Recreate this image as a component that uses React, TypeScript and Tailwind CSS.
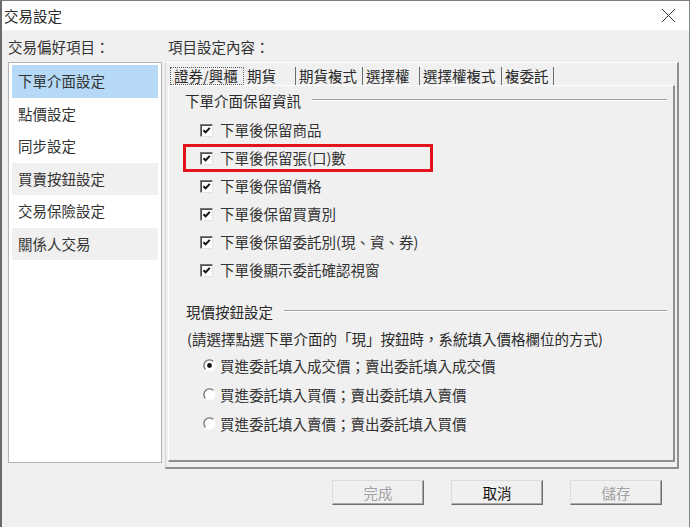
import React from "react"

const prefItems = [
  { label: "下單介面設定", bg: "bg-[#b5d9f6]" },
  { label: "點價設定", bg: "bg-white" },
  { label: "同步設定", bg: "bg-white" },
  { label: "買賣按鈕設定", bg: "bg-[#f0f0f0]" },
  { label: "交易保險設定", bg: "bg-white" },
  { label: "關係人交易", bg: "bg-[#f0f0f0]" },
]

const tabs = [
  { label: "證券/興櫃", w: "w-[74px]", active: true },
  { label: "期貨", w: "w-[52px]" },
  { label: "期貨複式", w: "w-[67px]" },
  { label: "選擇權", w: "w-[57px]" },
  { label: "選擇權複式", w: "w-[82px]" },
  { label: "複委託", w: "w-[52px]" },
]

const keepOptions = [
  "下單後保留商品",
  "下單後保留張(口)數",
  "下單後保留價格",
  "下單後保留買賣別",
  "下單後保留委託別(現、資、券)",
  "下單後顯示委託確認視窗",
]

const priceOptions = [
  "買進委託填入成交價；賣出委託填入成交價",
  "買進委託填入買價；賣出委託填入賣價",
  "買進委託填入賣價；賣出委託填入買價",
]

function CheckBox() {
  return (
    <span className="w-[13px] h-[13px] bg-white border border-t-[#7a7a7a] border-l-[#7a7a7a] border-r-[#e2e2e2] border-b-[#e2e2e2] shadow-[inset_1px_1px_0_#4a4a4a] flex items-center justify-center shrink-0">
      <svg width="11" height="11" viewBox="0 0 11 11">
        <path d="M2.5 5.2 L4.6 7.4 L8.8 2.8" fill="none" stroke="#111" strokeWidth="2" />
      </svg>
    </span>
  )
}

function Radio({ checked }: { checked?: boolean }) {
  return (
    <svg width="13" height="13" viewBox="0 0 13 13" className="shrink-0">
      <circle cx="6.5" cy="6.5" r="5.6" fill="#fff" />
      <path d="M2.54 10.46 A5.6 5.6 0 0 1 10.46 2.54" fill="none" stroke="#707070" strokeWidth="1.3" />
      <path d="M10.46 2.54 A5.6 5.6 0 0 1 2.54 10.46" fill="none" stroke="#fcfcfc" strokeWidth="1.3" />
      {checked && <circle cx="6.5" cy="6.5" r="2.4" fill="#111" />}
    </svg>
  )
}

function GroupTitle({ title }: { title: string }) {
  return (
    <div className="flex items-center h-[20px]">
      <span className="whitespace-nowrap">{title}</span>
      <div className="flex-1 ml-[11px] mr-[6px] mb-[3px] border-t border-t-[#a0a0a0] border-b border-b-white" />
    </div>
  )
}

function Button({ label, disabled }: { label: string; disabled?: boolean }) {
  return (
    <div
      className={`w-[92px] h-[25px] flex items-center justify-center bg-[#f0f0f0] border border-t-[#dcdcdc] border-l-[#dcdcdc] border-r-[#6e6e6e] border-b-[#6e6e6e] shadow-[inset_-1px_-1px_0_#a8a8a8] ${
        disabled ? "text-[#a3a3a3]" : "text-[#111]"
      }`}
    >
      {label}
    </div>
  )
}

export default function App() {
  return (
    <div className="w-[690px] h-[527px] bg-[#f0f0f0] border-l-2 border-l-[#6b6b6b] border-r border-r-[#7b8a8a] border-t border-t-[#7a7a7a] flex flex-col overflow-hidden font-['Noto_Sans_CJK_TC','Noto_Sans',sans-serif] text-[14.5px] leading-[20px] text-[#2a2a2a]">
      {/* Title bar */}
      <div className="h-[29px] bg-white flex items-center justify-between pl-[2px] pr-[13px] shrink-0">
        <span>交易設定</span>
        <svg width="15" height="15" viewBox="0 0 15 15">
          <path d="M1 1 L14 14 M14 1 L1 14" stroke="#333" strokeWidth="1" />
        </svg>
      </div>

      <div className="flex pt-[7px]">
        {/* Left: preference list */}
        <div className="ml-[6px] w-[154px] flex flex-col">
          <div className="h-[20px] mb-[5px] text-[#333]">交易偏好項目：</div>
          <div className="h-[401px] bg-white border border-[#b4b4b4] pt-[2px] px-[3px] flex flex-col">
            {prefItems.map((item) => (
              <div key={item.label} className={`h-[32.5px] flex items-center pl-[6px] text-[#333] ${item.bg}`}>
                {item.label}
              </div>
            ))}
          </div>
        </div>

        {/* Right: settings */}
        <div className="ml-[3px] w-[514px] flex flex-col">
          <div className="h-[20px] mb-[5px] pl-[3px] text-[#333]">項目設定內容：</div>
          <div className="h-[407px] border-l border-t border-l-[#d4d4d4] border-t-white border-r-2 border-b-2 border-r-[#8f8f8f] border-b-[#8f8f8f] flex flex-col">
            {/* Tabs */}
            <div className="h-[22px] flex items-end pl-[4px] shrink-0">
              {tabs.map((t) => (
                <div
                  key={t.label}
                  className={`${t.w} h-[18px] flex items-center pl-[3px] border-r border-r-[#6a6a6a] whitespace-nowrap ${
                    t.active ? "border-l border-t border-b border-dotted border-l-[#555] border-t-[#555] border-b-[#555]" : ""
                  }`}
                >
                  {t.label}
                </div>
              ))}
            </div>

            {/* Tab page */}
            <div className="ml-[2px] w-[507px] h-[377px] border-l border-t border-l-white border-t-white border-r-2 border-b-2 border-r-[#8f8f8f] border-b-[#8f8f8f] flex flex-col pt-[5px]">
              <div className="pl-[16px]">
                <GroupTitle title="下單介面保留資訊" />
              </div>
              <div className="mt-[5px] pl-[31px] flex flex-col">
                {keepOptions.map((opt, i) => (
                  <div key={opt} className="relative h-[28px] flex items-center gap-[7px]">
                    <CheckBox />
                    <span className="text-[#333]">{opt}</span>
                    {i === 1 && (
                      <span className="absolute left-[-17px] top-0 w-[250px] h-[28px] border-[3px] border-[#e2141c]" />
                    )}
                  </div>
                ))}
              </div>

              <div className="mt-[18px] pl-[17px]">
                <GroupTitle title="現價按鈕設定" />
              </div>
              <div className="mt-[7px] pl-[18px] h-[20px] whitespace-nowrap">
                (請選擇點選下單介面的「現」按鈕時，系統填入價格欄位的方式)
              </div>
              <div className="mt-[2px] pl-[34px] flex flex-col">
                {priceOptions.map((opt, i) => (
                  <div key={opt} className="h-[29px] flex items-center gap-[4px]">
                    <Radio checked={i === 0} />
                    <span className="text-[#333]">{opt}</span>
                  </div>
                ))}
              </div>
            </div>
          </div>
        </div>
      </div>

      {/* Buttons */}
      <div className="mt-[11px] flex justify-end gap-[27px] pr-[27px]">
        <Button label="完成" disabled />
        <Button label="取消" />
        <Button label="儲存" disabled />
      </div>
    </div>
  )
}
